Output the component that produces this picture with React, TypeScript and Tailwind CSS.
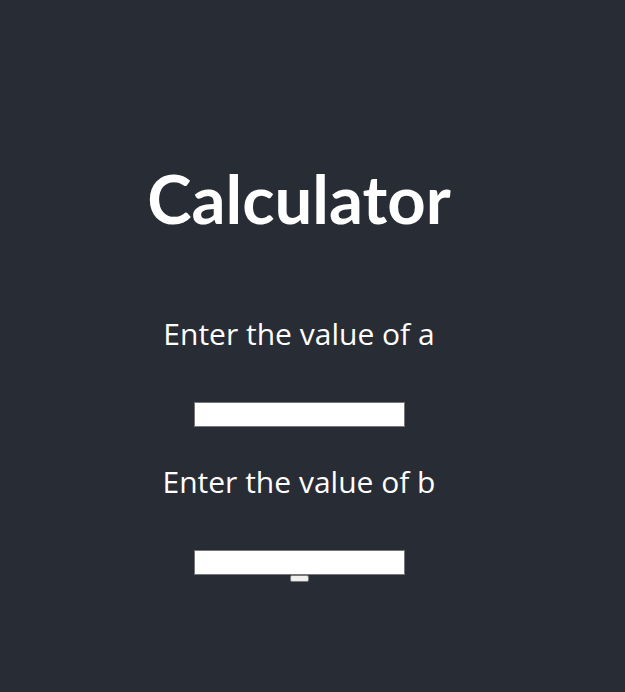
export default function App() {
  return (
    <div className="flex min-h-[692px] flex-col items-center bg-[#282c34] pr-[27px] font-['Open_Sans',sans-serif] text-white">
      <h1 className="mt-[158px] font-['Lato',sans-serif] text-[67px] font-bold leading-[80px]">Calculator</h1>
      <p className="mt-[76px] text-[30px] leading-[40px]">Enter the value of a</p>
      <input className="mt-[48px] h-[25px] w-[211px] border border-[#767676] bg-white" />
      <p className="mt-[35px] text-[30px] leading-[40px]">Enter the value of b</p>
      <input className="mt-[48px] h-[25px] w-[211px] border border-[#767676] bg-white" />
      <button className="h-[7px] w-[19px] rounded-[2px] border border-[#767676] bg-[#efefef]" />
    </div>
  );
}
